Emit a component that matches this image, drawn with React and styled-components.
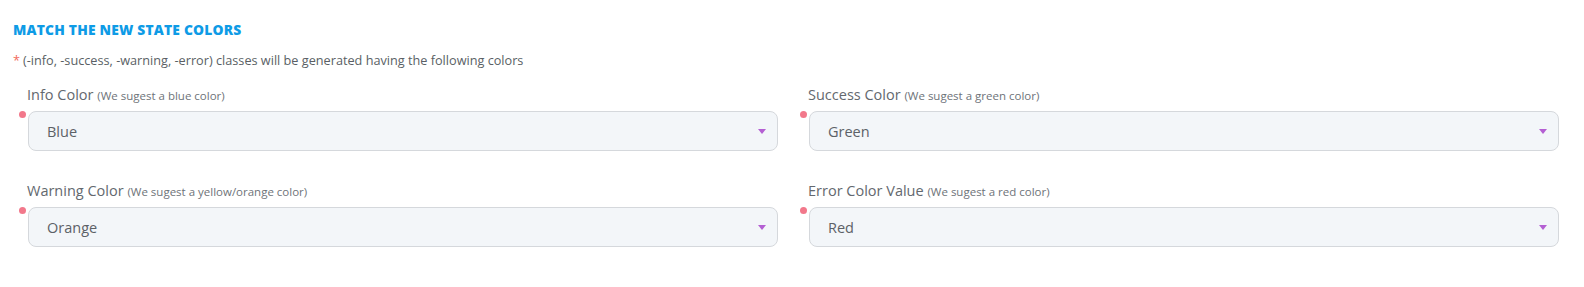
import React from "react";
import styled, { createGlobalStyle } from "styled-components";

const GlobalStyle = createGlobalStyle`
  body {
    margin: 0;
    background: #ffffff;
    font-family: "Open Sans", "Noto Sans", sans-serif;
  }
`;

const Page = styled.div`
  padding: 21px 25px 0 13px;
  width: 1584px;
  box-sizing: border-box;
`;

const Heading = styled.h3`
  margin: 0;
  font-size: 13.8px;
  font-weight: 800;
  letter-spacing: 0.2px;
  color: #0e9be6;
  text-transform: uppercase;
  line-height: 17px;
`;

const Note = styled.p`
  margin: 14px 0 0;
  font-size: 12.7px;
  color: #5a5f65;
  line-height: 16px;
`;

const Star = styled.span`
  color: #f26b5b;
  margin-right: 3px;
`;

const Grid = styled.div`
  display: grid;
  grid-template-columns: 750px 750px;
  column-gap: 31px;
  row-gap: 31px;
  margin: 18px 0 0 15px;
`;

const Field = styled.div`
  display: flex;
  flex-direction: column;
`;

const Label = styled.label`
  font-size: 14.5px;
  color: #63686e;
  line-height: 18px;
  margin-bottom: 6px;
  margin-left: -1px;

  small {
    font-size: 11.5px;
    color: #6e7379;
  }
`;

const SelectWrap = styled.div`
  position: relative;
  height: 40px;
  box-sizing: border-box;
  border: 1px solid #d5d8dc;
  border-radius: 8px;
  background: #f3f6f9;
  display: flex;
  align-items: center;
  padding: 0 18px;
  font-size: 14.5px;
  color: #5c6167;

  &::before {
    content: "";
    position: absolute;
    left: -10px;
    top: -1px;
    width: 7px;
    height: 7px;
    border-radius: 50%;
    background: #f2788b;
  }
`;

const Value = styled.span`
  flex: 1;
`;

const Caret = styled.span`
  width: 0;
  height: 0;
  border-left: 4px solid transparent;
  border-right: 4px solid transparent;
  border-top: 5px solid #b45fd3;
  margin-right: -7px;
`;

const fields = [
  { label: "Info Color", hint: "(We sugest a blue color)", value: "Blue" },
  { label: "Success Color", hint: "(We sugest a green color)", value: "Green" },
  { label: "Warning Color", hint: "(We sugest a yellow/orange color)", value: "Orange" },
  { label: "Error Color Value", hint: "(We sugest a red color)", value: "Red" },
];

export default function App() {
  return (
    <>
      <GlobalStyle />
      <Page>
        <Heading>Match the new state colors</Heading>
        <Note>
          <Star>*</Star>(-info, -success, -warning, -error) classes will be generated having the following colors
        </Note>
        <Grid>
          {fields.map((f) => (
            <Field key={f.label}>
              <Label>
                {f.label} <small>{f.hint}</small>
              </Label>
              <SelectWrap>
                <Value>{f.value}</Value>
                <Caret />
              </SelectWrap>
            </Field>
          ))}
        </Grid>
      </Page>
    </>
  );
}
